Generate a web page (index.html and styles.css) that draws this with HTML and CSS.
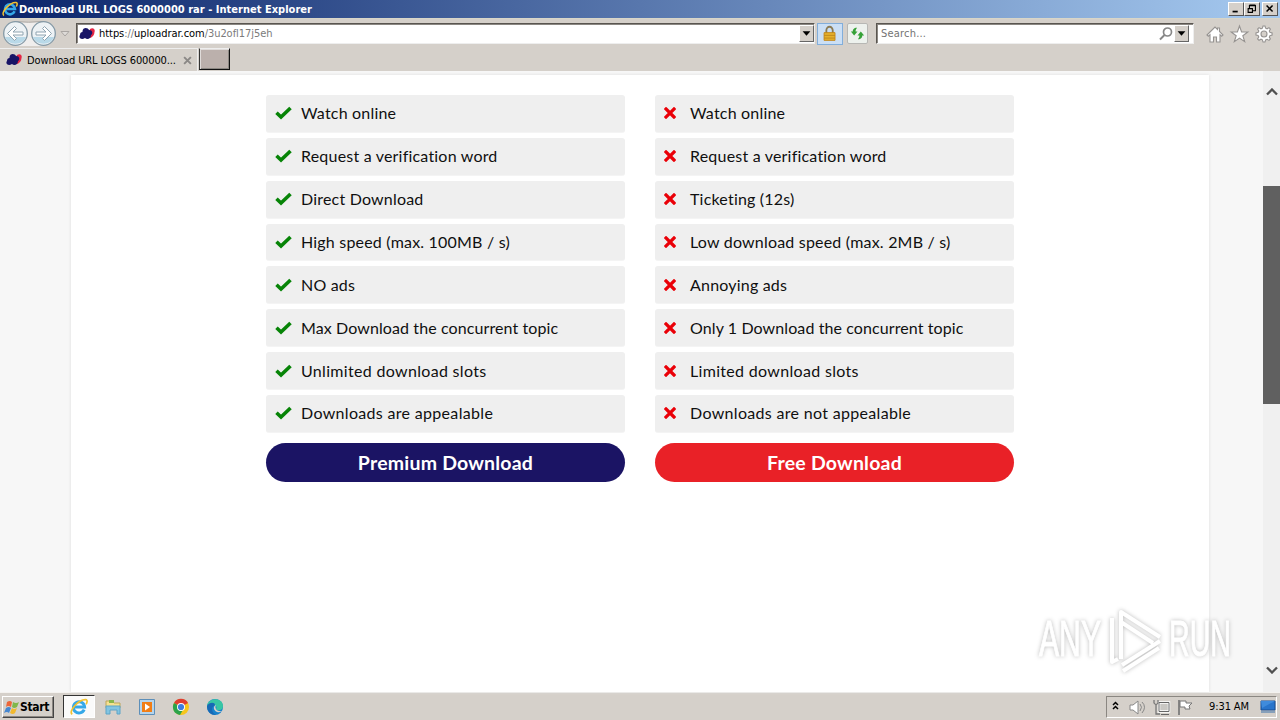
FILE: index.html
```html
<!DOCTYPE html>
<html lang="en">
<head>
<meta charset="utf-8">
<title>Download URL LOGS 6000000 rar</title>
<link rel="stylesheet" href="styles.css">
</head>
<body>
<svg class="defs" width="0" height="0">
  <defs>
    <symbol id="ie" viewBox="0 0 16 16"><path d="M12.6 10.3A5 5 0 1 1 13 8H4" fill="none" stroke="#35a8e8" stroke-width="2.6"/><path d="M2 14.5C-2 12 8 1 14 1.5c2 .2 1 3 .3 4" fill="none" stroke="#f2c230" stroke-width="1.5"/></symbol>
    <symbol id="cloud" viewBox="0 0 16 16"><path d="M11 3c3-2 5.500 0 4.500 3 0 3-2 5-4 6l-3-2z" fill="#e42544"/><path d="M3.500 6C3 1 9 1 10 4c4 0 4 4 2 5 0 4-4 5-6 3-4 3-7-1-5-3 0-2 1-3 2.500-3z" fill="#181466"/></symbol>
    <symbol id="check" viewBox="0 0 17 14"><path d="M1.500 6.800 6 11 15.500 2" fill="none" stroke="#078407" stroke-width="3.600"/></symbol>
    <symbol id="cross" viewBox="0 0 12 12"><path d="M2 2l8 8M10 2 2 10" fill="none" stroke="#ea0008" stroke-width="3.200" stroke-linecap="square"/></symbol>
  </defs>
</svg>
<div class="window">
  <header class="titlebar">
    <svg class="title-icon"><use href="#ie"/></svg>
    <span class="title-text">Download URL LOGS 6000000 rar - Internet Explorer</span>
    <div class="controls">
      <svg class="ctl" viewBox="0 0 16 14"><path d="M4 10h6" stroke="#000" stroke-width="2"/></svg>
      <svg class="ctl" viewBox="0 0 16 14"><path d="M5 6V3h7v6H9M5 2.500h7M3 6.500h6M3.500 6v5h5V6" fill="none" stroke="#000" stroke-width="1.300"/></svg>
      <svg class="ctl ctl-close" viewBox="0 0 16 14"><path d="M4 3l7 7M11 3l-7 7" stroke="#000" stroke-width="1.800"/></svg>
    </div>
  </header>
  <nav class="navbar">
    <svg class="arrows" width="58" height="30" viewBox="0 0 58 30">
      <path d="M15 3h29v24H15z" fill="#f0eeed"/><path d="M14 2.500Q29 4 43 2.500" fill="none" stroke="#aaa6a2"/>
      <g fill="#edf2f5" stroke="#8499a6" stroke-width="1.300"><circle cx="15.500" cy="14.500" r="11.800"/><circle cx="43.500" cy="14.500" r="11.800"/></g>
      <path d="M5 18a11 9.500 0 0 0 21 0zM33 18a11 9.500 0 0 0 21 0z" fill="#b9d9e8"/>
      <g fill="#fff" stroke="#8fa4b1" stroke-width="1"><path d="M7.500 14.500l7-7 2 2-3.500 3.500h10v3h-10l3.500 3.500-2 2z"/><path d="M51.500 14.500l-7-7-2 2 3.500 3.500h-10v3h10l-3.500 3.500 2 2z"/></g>
    </svg>
    <svg class="history" width="10" height="8" viewBox="0 0 10 8"><path d="M1 1.500h8L5 6z" fill="#dedbd8" stroke="#aaa6a3"/></svg>
    <div class="field address">
      <svg class="favicon"><use href="#cloud"/></svg>
      <span class="url"><b>https</b>://<b>uploadrar.com</b>/3u2ofl17j5eh</span>
      <svg class="drop" viewBox="0 0 15 17"><path d="M3 6h9l-4.500 5z"/></svg>
    </div>
    <svg class="lock" viewBox="0 0 25 22"><path d="M8.500 10V7a3.500 4 0 0 1 7 0v3" fill="none" stroke="#8b7b54" stroke-width="2"/><path d="M6 9.500h12v8.500H6z" fill="#e5b12c" stroke="#c28516"/><path d="M6 12.500h12M6 15.500h12" stroke="#bf861c"/></svg>
    <svg class="refresh" viewBox="0 0 20 20"><path d="M9.500 4C6 4 5 6 5 8H3l3.500 4L10 8H8C8 6 8.500 5.500 9.500 4zM10.500 16c3.500 0 4.500-2 4.500-4h2l-3.500-4-3.500 4h2c0 2-.5 2.500-1.500 4z" fill="#35a137"/></svg>
    <div class="field search">
      <span class="placeholder">Search...</span>
      <svg class="glass" viewBox="0 0 14 14"><circle cx="8.500" cy="5" r="4" fill="none" stroke="#878787" stroke-width="1.700"/><path d="M5.500 8 1 12.500" stroke="#878787" stroke-width="2"/></svg>
      <svg class="drop" viewBox="0 0 15 17"><path d="M3 6h9l-4.500 5z"/></svg>
    </div>
    <svg class="tools" width="70" height="20" viewBox="0 0 70 20" fill="#fff" stroke="#969391" stroke-width="1.100">
      <path d="M1 11 9 3l2.500 2.500V4h2v3.500L17 11l-1.300 1.200L14 10.700V18h-3.500v-5h-3v5H4v-7.300l-1.700 1.500z"/>
      <path d="M33.500 2l2.100 6h6.200l-5 3.700 1.900 6-5.200-3.600-5.200 3.600 1.900-6-5-3.700h6.200z"/>
      <path d="M57 2h2l.6 2.200 1.500.6L63 3.600 64.400 5l-1.100 2 .6 1.400 2.200.6v2l-2.200.6-.6 1.500 1.100 1.900-1.400 1.400-1.900-1.100-1.500.6L59 18h-2l-.6-2.200-1.400-.6-2 1.100-1.400-1.400 1.200-1.900-.7-1.500-2.100-.5V9l2.200-.6.6-1.400-1.200-2L53 3.600l2 1.200 1.400-.6z"/><circle cx="58" cy="10" r="3" fill="#d5d0ca"/>
    </svg>
  </nav>
  <div class="tabs">
    <div class="tab"><svg class="favicon"><use href="#cloud"/></svg><span class="tab-text">Download URL LOGS 600000...</span><svg class="tab-close" viewBox="0 0 8 8"><path d="M1 1l6 6M7 1 1 7" stroke="#8b8886" stroke-width="1.700"/></svg></div>
    <div class="new-tab"></div>
  </div>
  <main class="viewport">
    <section class="sheet">
      <div class="plans">
        <div class="plan">
          <ul class="features">
            <li><svg class="check"><use href="#check"/></svg><span>Watch online</span></li>
            <li><svg class="check"><use href="#check"/></svg><span>Request a verification word</span></li>
            <li><svg class="check"><use href="#check"/></svg><span>Direct Download</span></li>
            <li><svg class="check"><use href="#check"/></svg><span>High speed (max. 100MB / s)</span></li>
            <li><svg class="check"><use href="#check"/></svg><span>NO ads</span></li>
            <li class="tight"><svg class="check"><use href="#check"/></svg><span>Max Download the concurrent topic</span></li>
            <li class="loose"><svg class="check"><use href="#check"/></svg><span>Unlimited download slots</span></li>
            <li class="loose"><svg class="check"><use href="#check"/></svg><span>Downloads are appealable</span></li>
          </ul>
          <div class="button premium">Premium Download</div>
        </div>
        <div class="plan">
          <ul class="features">
            <li><svg class="cross"><use href="#cross"/></svg><span>Watch online</span></li>
            <li><svg class="cross"><use href="#cross"/></svg><span>Request a verification word</span></li>
            <li><svg class="cross"><use href="#cross"/></svg><span>Ticketing (12s)</span></li>
            <li><svg class="cross"><use href="#cross"/></svg><span>Low download speed (max. 2MB / s)</span></li>
            <li><svg class="cross"><use href="#cross"/></svg><span>Annoying ads</span></li>
            <li class="tight"><svg class="cross"><use href="#cross"/></svg><span>Only 1 Download the concurrent topic</span></li>
            <li class="loose"><svg class="cross"><use href="#cross"/></svg><span>Limited download slots</span></li>
            <li class="loose"><svg class="cross"><use href="#cross"/></svg><span>Downloads are not appealable</span></li>
          </ul>
          <div class="button free">Free Download</div>
        </div>
      </div>
    </section>
    <aside class="scrollbar">
      <svg width="12" height="8" viewBox="0 0 12 8"><path d="M1 6.500 6 1.500l5 5" fill="none" stroke="#505050" stroke-width="2.300"/></svg>
      <div class="thumb"></div>
      <svg class="down" width="12" height="8" viewBox="0 0 12 8"><path d="M1 1.500 6 6.500l5-5" fill="none" stroke="#505050" stroke-width="2.300"/></svg>
    </aside>
    <svg class="watermark" width="214" height="74" viewBox="0 0 214 74">
      <g class="mark-text"><text x="6" y="51" textLength="62" lengthAdjust="spacingAndGlyphs">ANY</text><text x="136" y="51" textLength="62" lengthAdjust="spacingAndGlyphs">RUN</text></g>
      <g class="mark-logo"><path d="M88 54V7l39 25M88 17l32 21M79 13v44l6-3M89 60l38-24M90 66l36-23"/></g>
    </svg>
  </main>
  <footer class="taskbar">
    <div class="start"><svg width="16" height="16" viewBox="0 0 16 16"><path d="M3 3q3-2 5 0L7 8Q4 6 2 8z" fill="#ed6638"/><path d="M9 3q3 2 6 0l-2 5q-3 2-5 0z" fill="#80b74a"/><path d="M2 9q3-2 5 0l-2 5q-2-2-5 0z" fill="#4687d0"/><path d="M8 9q2 2 5 0l-2 5q-2 2-5 0z" fill="#f2b92e"/></svg><span>Start</span></div>
    <div class="active-task"><svg width="18" height="18"><use href="#ie"/></svg></div>
    <svg class="task" viewBox="0 0 18 18"><path d="M2 3h6l2 2h6v5H2z" fill="#f6e191" stroke="#bda65a"/><path d="M5 2h5v3H5z" fill="#88b64b"/><path d="M2 8h14v8h-3v-4H6v4H2z" fill="#82c4e1" stroke="#5ca4c7"/></svg>
    <svg class="task" viewBox="0 0 18 18"><path d="M1.500 1.500h15v15h-15z" fill="#b5d4ec" stroke="#5d8fb9"/><path d="M4 4h10v10H4z" fill="#f17e16"/><path d="M7 5.500v7L12 9z" fill="#fff"/></svg>
    <svg class="task" viewBox="0 0 18 18"><circle cx="9" cy="9" r="8" fill="#f6c61c"/><path d="M9 9 2 5a8 8 0 0 1 14 0z" fill="#df3e31"/><path d="M9 9 2 5a8 8 0 0 0 6 12l4-7z" fill="#2ba34b"/><circle cx="9" cy="9" r="4" fill="#fff"/><circle cx="9" cy="9" r="3.100" fill="#3d7de0"/></svg>
    <svg class="task" viewBox="0 0 18 18"><circle cx="9" cy="9" r="8" fill="#1681cc"/><path d="M1 8C2-1 17-1 17 8c0 5-6 5-7 3 2-3-2-6-9-3z" fill="#38c6a4"/><path d="M10 7c-3 1-3 5 1 7 3 1 5-1 5-1-4 1-8-2-6-6z" fill="#d5d0ca"/><path d="M1 8c2-4 8-4 8-1-5 2-3 8 1 10C5 17 1 14 1 8z" fill="#1769b5"/></svg>
    <div class="tray">
      <svg width="86" height="20" viewBox="0 0 86 20" fill="none">
        <path d="M6 8l2.500-2.500L11 8M6 12l2.500-2.500L11 12" stroke="#000" stroke-width="1.500"/>
        <path d="M23 8h3l5-4v13l-5-4h-3z" fill="#fff" stroke="#888"/><path d="M33 7q3 3 0 7M35 5q5 5 0 11" stroke="#888"/>
        <path d="M52 5.500h10v9H52z" fill="#c9c7c3" stroke="#fff" stroke-width="2.500"/><path d="M52 5.500h10v9H52zM54 17.500h8" stroke="#666"/><path d="M47 3v3q2 3 4 0V3M49 7v10h4" stroke="#777" stroke-width="1.300"/>
        <path d="M72 3v15" stroke="#777" stroke-width="1.700"/><path d="M73 4h6v2h6l-3 3 1 3h-5v-2h-5z" fill="#fff" stroke="#777"/>
      </svg>
      <span class="clock">9:31 AM</span>
      <svg class="desktop" width="16" height="14" viewBox="0 0 16 14"><path d="M1 1h14v9H1z" fill="#2874cb" stroke="#164c93"/><path d="M1 1h14L2 8z" fill="#3f8bdc"/><path d="M1 12h14" stroke="#6d91b5" stroke-width="1.500"/></svg>
    </div>
  </footer>
</div>
</body>
</html>
```
FILE: styles.css
```css
* { box-sizing: border-box; }
body { margin: 0; overflow: hidden; background: #fff; }
svg { display: block; flex: none; }
.defs { position: absolute; }
.window { width: 1280px; height: 720px; display: flex; flex-direction: column; background: #d5d0ca; font: 11px/14px "DejaVu Sans Condensed", "DejaVu Sans", sans-serif; color: #000; white-space: nowrap; }
.titlebar { height: 18px; flex: none; display: flex; align-items: center; padding: 0 2px; background: linear-gradient(90deg, #0a246a, #a6caf0); color: #fff; }
.title-icon { width: 16px; height: 16px; }
.title-text { margin-left: 1px; padding-top: 1px; font-weight: bold; letter-spacing: .02px; }
.controls { display: flex; margin-left: auto; }
.ctl { width: 16px; height: 14px; background: #d5d0ca; border: 1px solid; border-color: #fff #555 #555 #fff; }
.ctl-close { margin-left: 2px; }
.navbar { height: 30px; flex: none; display: flex; align-items: center; border-top: 1px solid #d8d6c8; }
.history { margin-left: 2px; }
.field { height: 21px; display: flex; align-items: center; background: #fff; border: 1px solid; border-color: #595550 #eee #eee #595550; box-shadow: inset 1px 1px #8b8782; }
.address { width: 739px; margin-left: 6px; padding-left: 2px; }
.favicon { width: 16px; height: 16px; }
.url { margin-left: 4px; color: #7b7b7b; letter-spacing: -.05px; }
.url b { font-weight: normal; color: #000; }
.drop { width: 15px; height: 17px; margin-left: auto; background: #d5d0ca; border: 1px solid; border-color: #fff #666 #666 #fff; }
.lock { width: 26px; height: 22px; margin-left: 2px; background: #cbdff5; border: 1px solid #82aedb; }
.refresh { width: 21px; height: 21px; margin-left: 4px; background: #edf1ed; border: 1px solid #b7b7b4; border-radius: 2px; }
.search { width: 318px; margin-left: 8px; padding: 0 4px; }
.placeholder { color: #737373; letter-spacing: .2px; }
.glass { width: 14px; height: 14px; margin-left: auto; }
.search .drop { margin-left: 1px; }
.tools { margin-left: 12px; }
.tabs { height: 23px; flex: none; display: flex; }
.tab { width: 198px; display: flex; align-items: center; padding-left: 6px; border-top: 1px solid #eee; border-right: 1px solid #eee; }
.tab-text { width: 150px; margin-left: 5px; padding-top: 1px; letter-spacing: -.13px; }
.tab-close { width: 9px; height: 9px; margin-left: 6px; }
.new-tab { width: 31px; height: 22px; margin-left: 1px; background: #bbb0ac; border: 1px solid; border-color: #eee #111 #111 #333; box-shadow: inset 1px 1px #e0dcda, inset -1px -1px #8b8782; }
.viewport { position: relative; flex: 1; min-height: 0; display: flex; justify-content: space-between; padding-left: 71px; background: #f7f7f7; }
.sheet { width: 1138px; margin-top: 4px; padding-top: 20px; background: #fff; box-shadow: 0 0 3px #ddd; }
.plans { display: flex; gap: 30px; width: 748px; margin: 0 auto; }
.plan { flex: 1; }
.features { list-style: none; margin: 0 0 10px; padding: 0; display: grid; gap: 5px; font: 16px/22px Lato, "Open Sans", sans-serif; }
.features li { height: 37.86px; display: flex; align-items: center; padding-left: 9px; background: #efefef; border-radius: 3px; border-bottom: 1px solid #f4f4f4; }
.features span { letter-spacing: .2px; color: #101010; }
.features .tight span { letter-spacing: .1px; }
.features .loose span { letter-spacing: .32px; }
.check { width: 17px; height: 14px; margin-right: 9px; }
.cross { width: 12px; height: 12px; margin-right: 14px; }
.button { height: 39.5px; border-radius: 20px; color: #fff; font: 700 19.500px/39px Lato, "Open Sans", sans-serif; letter-spacing: .2px; text-align: center; }
.premium { background: #1b1464; }
.free { background: #e92127; }
.scrollbar { width: 17px; display: flex; flex-direction: column; align-items: center; padding: 17px 0 18px; background: #f0f0f0; }
.thumb { width: 17px; height: 218px; margin-top: 90px; background: #606060; }
.down { margin-top: auto; }
.watermark { position: absolute; left: 1033px; top: 534px; overflow: visible; }
.mark-text { font: 50px "Liberation Sans Narrow", "Liberation Sans", sans-serif; fill: #fff; stroke: #fff; stroke-width: 1px; filter: drop-shadow(0 0 2px #bbb); }
.mark-logo { fill: none; stroke: #fff; stroke-width: 4px; stroke-linejoin: round; filter: drop-shadow(0 0 2px #bbb); }
.taskbar { height: 28px; flex: none; display: flex; align-items: center; padding: 0 3px 0 2px; border-top: 1px solid #f4f2ef; }
.start { width: 52px; height: 22px; display: flex; align-items: center; padding-left: 1px; font-weight: bold; font-size: 12px; letter-spacing: -.35px; border: 1px solid; border-color: #fff #444 #444 #fff; box-shadow: inset -1px -1px #8b8782; }
.active-task { width: 32px; height: 23px; margin-left: 9px; display: grid; place-items: center; background: #fafafa; border: 1px solid; border-color: #333 #fff #fff #333; }
.task { width: 18px; height: 18px; margin-left: 16px; }
.active-task + .task { margin-left: 9px; }
.tray { width: 171px; height: 22px; display: flex; align-items: center; margin-left: auto; border: 1px solid; border-color: #8b8782 #fff #fff #8b8782; }
.clock { margin-left: 16px; letter-spacing: -.1px; }
.desktop { margin-left: auto; }
```
